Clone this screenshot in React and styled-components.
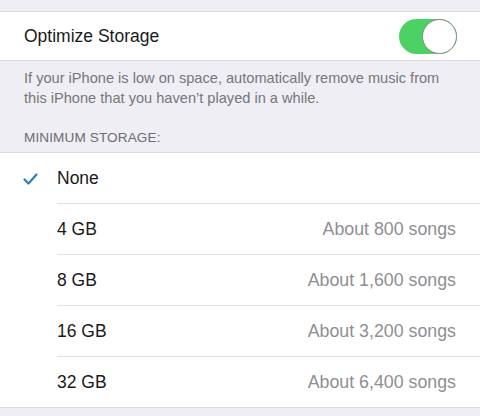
import React from "react";
import styled, { createGlobalStyle } from "styled-components";

const options = [
  { label: "None", detail: "", checked: true },
  { label: "4 GB", detail: "About 800 songs" },
  { label: "8 GB", detail: "About 1,600 songs" },
  { label: "16 GB", detail: "About 3,200 songs" },
  { label: "32 GB", detail: "About 6,400 songs" },
];

function App() {
  return (
    <Page>
      <GlobalStyle />
      <Group>
        <ToggleRow>
          <Label>Optimize Storage</Label>
          <Switch>
            <Knob />
          </Switch>
        </ToggleRow>
      </Group>
      <Footer>
        If your iPhone is low on space, automatically remove music from
        <br />
        this iPhone that you haven’t played in a while.
      </Footer>
      <Header>Minimum Storage:</Header>
      <Group>
        {options.map((o, i) => (
          <OptionRow key={o.label} last={i === options.length - 1}>
            <CheckCell>
              {o.checked && (
                <svg width="15" height="12" viewBox="0 0 15 12">
                  <path
                    d="M1.5 6.5 L5.5 10.5 L13.5 1.5"
                    fill="none"
                    stroke="#2f7fae"
                    strokeWidth="2.2"
                    strokeLinecap="round"
                    strokeLinejoin="round"
                  />
                </svg>
              )}
            </CheckCell>
            <OptionBody last={i === options.length - 1}>
              <Label>{o.label}</Label>
              <Detail>{o.detail}</Detail>
            </OptionBody>
          </OptionRow>
        ))}
      </Group>
    </Page>
  );
}

export default App;

const GlobalStyle = createGlobalStyle`
  body {
    margin: 0;
    background: #efeef4;
    font-family: "Liberation Sans", Arial, sans-serif;
    -webkit-font-smoothing: antialiased;
  }
`;

const Page = styled.div`
  width: 480px;
  height: 416px;
  overflow: hidden;
  padding-top: 11px;
  box-sizing: border-box;
  background: #efeef4;
`;

const Group = styled.div`
  background: #fff;
  border-top: 1px solid #dcdce0;
  border-bottom: 1px solid #dcdce0;
`;

const ToggleRow = styled.div`
  height: 48px;
  display: flex;
  align-items: center;
  justify-content: space-between;
  padding: 0 23px 0 24px;
`;

const Label = styled.span`
  font-size: 17.5px;
  color: #1a1a1a;
`;

const Switch = styled.div`
  width: 58px;
  height: 35px;
  border-radius: 18px;
  background: #4cd264;
  position: relative;
`;

const Knob = styled.div`
  position: absolute;
  right: 0;
  top: 0;
  width: 33px;
  height: 33px;
  border-radius: 50%;
  background: #fff;
  border: 1px solid #7e8c82;
`;

const Footer = styled.div`
  padding: 7px 24px 0;
  font-size: 14.6px;
  line-height: 20px;
  color: #76767b;
`;

const Header = styled.div`
  padding: 22px 24px 6px;
  font-size: 13.6px;
  line-height: 16px;
  text-transform: uppercase;
  color: #6d6d72;
  letter-spacing: 0.1px;
`;

const OptionRow = styled.div`
  display: flex;
  height: ${(p) => (p.last ? "50px" : "51px")};
`;

const CheckCell = styled.div`
  width: 57px;
  flex-shrink: 0;
  display: flex;
  align-items: center;
  padding-left: 23px;
  box-sizing: border-box;
`;

const OptionBody = styled.div`
  flex: 1;
  display: flex;
  align-items: center;
  justify-content: space-between;
  padding-right: 24px;
  border-bottom: ${(p) => (p.last ? "none" : "1px solid #e3e3e6")};
`;

const Detail = styled.span`
  font-size: 17.8px;
  color: #8e8e93;
`;
